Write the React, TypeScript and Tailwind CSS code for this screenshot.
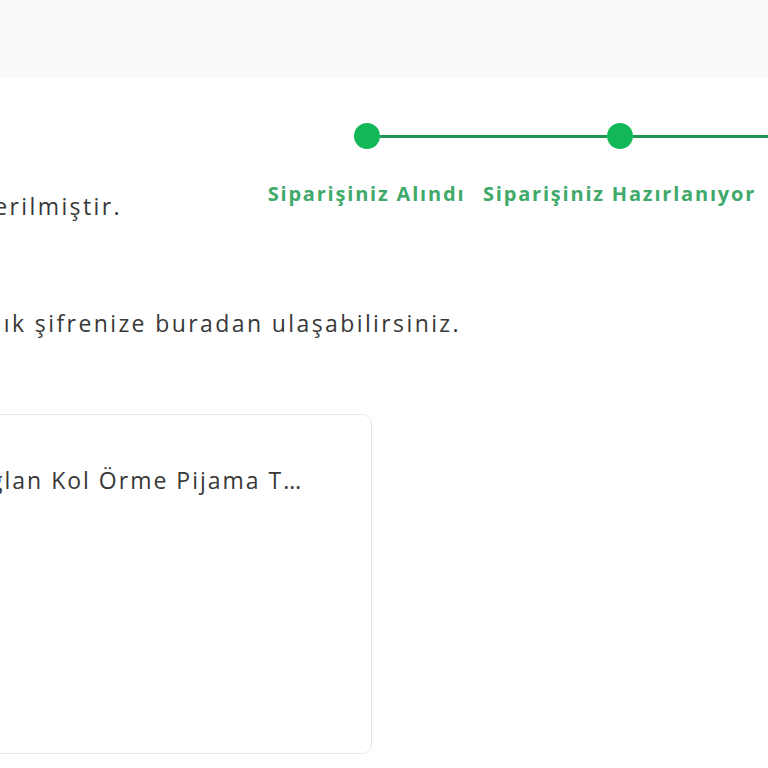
const steps = [
  { label: "Siparişiniz Alındı", first: true },
  { label: "Siparişiniz Hazırlanıyor", first: false },
  { label: "Kargoya Verildi", first: false },
];

const App = () => {
  return (
    <div
      className="w-[768px] h-[768px] overflow-hidden bg-white text-[#383838]"
      style={{ fontFamily: '"Open Sans", "Noto Sans", sans-serif' }}
    >
      <div className="h-[78px] bg-[#fafafa]" />

      <div className="flex items-start pt-[45px]">
        <div className="w-[240px] shrink-0 pt-[68px]">
          <div className="w-[122px] flex justify-end overflow-hidden whitespace-nowrap">
            <p className="text-[23px] leading-[30px] tracking-[2.4px] shrink-0">
              Siparişinize ait bilgiler e-posta adresinize gönderilmiştir.
            </p>
          </div>
        </div>

        <div className="flex shrink-0">
          {steps.map((step) => (
            <div key={step.label} className="w-[253px] shrink-0 flex flex-col items-center">
              <div className="w-full h-[26px] flex items-center">
                <div className={`flex-1 h-[3px] ${step.first ? "bg-transparent" : "bg-[#1f9558]"}`} />
                <div className="w-[26px] h-[26px] rounded-full bg-[#12b857] shrink-0" />
                <div className="flex-1 h-[3px] bg-[#1f9558]" />
              </div>
              <p className="mt-[31px] whitespace-nowrap text-[#3fa96a] text-[20px] font-bold leading-[28px] tracking-[1.8px]">
                {step.label}
              </p>
            </div>
          ))}
        </div>
      </div>

      <div className="mt-[87px] w-[461px] flex justify-end overflow-hidden whitespace-nowrap">
        <p className="text-[23px] leading-[30px] tracking-[2.4px] shrink-0">
          Tek kullanımlık şifrenize buradan ulaşabilirsiniz.
        </p>
      </div>

      <div className="mt-[76px] w-[372px] flex justify-end overflow-hidden">
        <div className="w-[832px] shrink-0 h-[340px] border border-[#e6e6e6] rounded-[10px] flex pt-[50px] pr-[56px]">
          <div className="w-[180px] shrink-0" />
          <p className="flex-1 min-w-0 truncate text-[23px] leading-[30px] tracking-[2px]">
            Mor Desenli Kadın Reglan Kol Örme Pijama Takımı
          </p>
        </div>
      </div>
    </div>
  );
};

export default App;
